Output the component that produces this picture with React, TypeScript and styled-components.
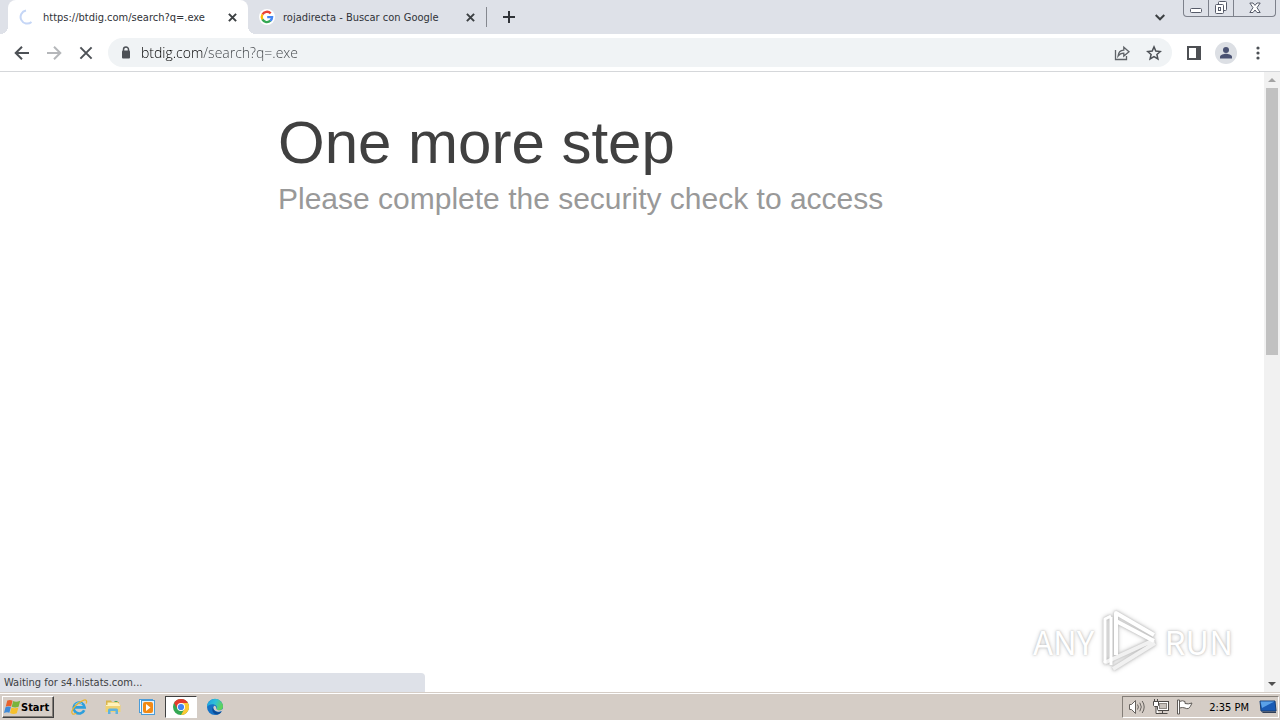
import React from "react";
import styled, { createGlobalStyle, css } from "styled-components";

const ui = `"DejaVu Sans Condensed", "DejaVu Sans", Tahoma, sans-serif`;

const GlobalStyle = createGlobalStyle`
  * { box-sizing: border-box; }
  html, body { margin: 0; padding: 0; background: #fff; }
  body { font-family: ${ui}; font-size: 11px; color: #303338; }
  button { font: inherit; color: inherit; border: 0; padding: 0; margin: 0; background: none; }
  svg { display: block; flex: none; }
`;

const Screen = styled.div`
  display: flex;
  flex-direction: column;
  height: 100vh;
  overflow: hidden;
`;

const TabStrip = styled.header`
  display: flex;
  height: 34px;
  flex: none;
  padding-left: 8px;
  background: #dee1e8;
`;

const TabItem = styled.div<{ $active?: boolean }>`
  position: relative;
  display: flex;
  align-items: center;
  width: ${(p) => (p.$active ? 240 : 238)}px;
  height: 34px;
  padding: 0 9px 0 11px;
  ${(p) =>
    p.$active &&
    css`
      background: #fff;
      border-radius: 8px 8px 0 0;
      &::before,
      &::after {
        content: "";
        position: absolute;
        bottom: 0;
        width: 8px;
        height: 8px;
      }
      &::before {
        left: -8px;
        background: radial-gradient(circle at 0 0, #dee1e8 8px, #fff 8px);
      }
      &::after {
        right: -8px;
        background: radial-gradient(circle at 100% 0, #dee1e8 8px, #fff 8px);
      }
    `}
`;

const TabLabel = styled.button`
  display: flex;
  align-items: center;
  flex: 1;
  gap: 8px;
  min-width: 0;
  white-space: nowrap;
  text-align: left;
`;

const IconButton = styled.button<{ $w?: number }>`
  display: flex;
  align-items: center;
  justify-content: center;
  flex: none;
  width: ${(p) => p.$w ?? 32}px;
  height: 28px;
`;

const TabClose = styled(IconButton)`
  width: 14px;
`;

const TabDivider = styled.span`
  align-self: center;
  width: 1px;
  height: 20px;
  margin-right: 6px;
  background: #85888f;
`;

const StripButton = styled(IconButton)`
  height: 34px;
`;

const Spacer = styled.div`
  flex: 1;
`;

const WindowButtons = styled.div`
  display: flex;
  height: 17px;
  margin: 0 4px 0 7px;
  border: 1px solid #7d818b;
  border-top: 0;
  border-radius: 0 0 4px 4px;
`;

const WindowButton = styled.button<{ $w: number }>`
  display: flex;
  align-items: center;
  justify-content: center;
  width: ${(p) => p.$w}px;
  & + & {
    border-left: 1px solid #7d818b;
  }
`;

const Toolbar = styled.nav`
  display: flex;
  align-items: center;
  height: 38px;
  flex: none;
  padding: 0 6px;
  background: #fff;
  border-bottom: 1px solid #d5d7da;
`;

const AddressBar = styled.label`
  display: flex;
  align-items: center;
  flex: 1;
  height: 29px;
  margin: 0 6px;
  padding: 0 2px 0 10px;
  border-radius: 15px;
  background: #f0f3f5;
`;

const AddressInput = styled.input`
  flex: 1;
  min-width: 0;
  height: 28px;
  margin-left: 7px;
  padding: 0;
  border: 0;
  outline: 0;
  font: 300 14px/28px "Open Sans", "Noto Sans", sans-serif;
  color: #3f4347;
  background: linear-gradient(90deg, #000 62px, #3f4347 62px);
  background-clip: text;
  -webkit-text-fill-color: transparent;
`;

const Viewport = styled.div`
  position: relative;
  display: flex;
  flex: 1;
  min-height: 0;
`;

const Page = styled.main`
  flex: 1;
  padding-top: 35px;
  font-family: "Liberation Sans", Arial, sans-serif;
`;

const Heading = styled.section`
  max-width: 708px;
  margin: 0 auto;
`;

const Title = styled.h1`
  margin: 0;
  font-size: 60px;
  line-height: 72px;
  font-weight: 400;
  color: #404040;
`;

const Subtitle = styled.h2`
  margin: 0;
  font-size: 30px;
  line-height: 40px;
  font-weight: 400;
  color: #999;
`;

const ScrollColumn = styled.div`
  display: flex;
  flex-direction: column;
  width: 16px;
  background: #f1f1f1;
`;

const ScrollArrow = styled.button`
  display: flex;
  align-items: center;
  justify-content: center;
  height: 16px;
  flex: none;
`;

const ScrollThumb = styled.div`
  flex: 5;
  margin: 0 2px;
  background: #c1c1c1;
`;

const ScrollRest = styled.div`
  flex: 6;
`;

const StatusBubble = styled.output`
  position: absolute;
  left: 0;
  bottom: 0;
  width: 425px;
  height: 19px;
  padding-left: 4px;
  line-height: 20px;
  background: #dee1e8;
  border-top-right-radius: 4px;
  color: #3c4043;
`;

const Watermark = styled.div`
  position: absolute;
  right: 47px;
  bottom: 19px;
  display: flex;
  align-items: center;
  gap: 6px;
  font: 400 33px/64px "Noto Sans CJK JP", "Liberation Sans", sans-serif;
  color: #fff;
  text-shadow: 0 0 2px #bbb, 0 0 4px #ccc;
  svg {
    filter: drop-shadow(0 0 1px #bbb) drop-shadow(0 0 2px #ccc);
  }
`;

const Taskbar = styled.footer`
  display: flex;
  align-items: center;
  flex: none;
  height: 28px;
  padding: 1px 1px 0 2px;
  background: #d5cdc6;
  border-top: 1px solid #d5cdc6;
  box-shadow: inset 0 1px #fff;
`;

const StartButton = styled.button`
  display: flex;
  align-items: center;
  width: 52px;
  height: 22px;
  padding-left: 1px;
  margin-right: 8px;
  border: 1px solid;
  border-color: #fff #404040 #404040 #fff;
  box-shadow: inset -1px -1px #847e78;
  font-weight: 700;
  color: #000;
`;

const TaskButton = styled.button<{ $active?: boolean }>`
  display: flex;
  align-items: center;
  justify-content: center;
  width: 32px;
  height: 22px;
  margin: 0 1px;
  ${(p) =>
    p.$active &&
    css`
      background: #fff;
      border: 1px solid;
      border-color: #404040 #fff #fff #404040;
    `}
`;

const Tray = styled.div`
  display: flex;
  align-items: center;
  height: 22px;
  padding: 0 1px 0 2px;
  border: 1px solid;
  border-color: #847e78 #fff #fff #847e78;
`;

const TrayButton = styled.button<{ $w?: number }>`
  display: flex;
  justify-content: center;
  width: ${(p) => p.$w ?? 24}px;
`;

const Clock = styled.time`
  margin: 0 10px 0 12px;
  color: #000;
`;

const CrossIcon = ({ size, color = "#3c4043", width = 2 }: { size: number; color?: string; width?: number }) => (
  <svg width={size} height={size} viewBox="0 0 10 10" stroke={color} strokeWidth={(width * 10) / size}>
    <path d="M1 1 9 9M9 1 1 9" />
  </svg>
);

const ArrowIcon = ({ forward }: { forward?: boolean }) => (
  <svg width="16" height="16" viewBox="0 0 16 16" fill="none" stroke={forward ? "#b5b7ba" : "#4d5156"} strokeWidth="2">
    <path d={forward ? "M1 8h13M8 1.7 14.3 8 8 14.3" : "M15 8H2M8 1.7 1.7 8 8 14.3"} />
  </svg>
);

const GoogleIcon = () => (
  <svg width="16" height="16" viewBox="0 0 16 16">
    <circle cx="8" cy="8" r="8" fill="#fff" />
    <g fill="none" strokeWidth="2.3">
      <path d="M3.4 5.6A5.1 5.1 0 0 1 11.7 4.4" stroke="#ea4335" />
      <path d="M3.4 5.5a5.1 5.1 0 0 0 0 5" stroke="#fbbc05" />
      <path d="M3.4 10.4a5.1 5.1 0 0 0 8 1.3" stroke="#34a853" />
      <path d="M11.3 11.8A5 5 0 0 0 13.1 8.1H8.2" stroke="#4285f4" />
    </g>
  </svg>
);

const WindowsFlag = () => (
  <svg width="17" height="16" viewBox="0 0 17 16">
    <path d="M3.3 1.6C5.2.6 7 .8 8.6 1.700L7.100 7.500C5.500 6.700 3.700 6.600 1.700 7.700Z" fill="#e8622c" />
    <path d="M9.200 2C11 3 13.200 3 16.200 1.700L14.600 7.700C12 8.800 9.800 8.600 7.700 7.700Z" fill="#79b43c" />
    <path d="M1.500 8.300C3.500 7.200 5.300 7.300 6.900 8.100L5.400 13.800C3.900 12.900 2 12.900 0 14Z" fill="#3f8ad8" />
    <path d="M7.500 8.500C9.400 9.400 11.600 9.500 14.400 8.400L12.800 14.200C10.400 15.400 8.200 15.100 6 14Z" fill="#f6c02c" />
  </svg>
);

const IeIcon = () => (
  <svg width="18" height="18" viewBox="0 0 18 18" fill="none">
    <path d="M14.200 12.200A5.500 5.500 0 1 1 14.600 9.400H5" stroke="#2d9fdc" strokeWidth="2.600" />
    <path d="M4.900 6.900A4.600 4.600 0 0 1 12 6" stroke="#8ed6f6" strokeWidth="1" />
    <path d="M16.200 5.600C17.200 3 16.500 1.200 13.300 2.300 8.500 4 2.900 9.500 1.900 13.500 1.200 16.500 3.400 16.900 6.200 15.200" stroke="#e9b52f" strokeWidth="1.300" />
  </svg>
);

const FolderIcon = () => (
  <svg width="18" height="18" viewBox="0 0 18 18">
    <path d="M2 2.500h5l1 1.500h7V14H2z" fill="#d9b54c" />
    <path d="M3.500 4.500h10l2 1.500v7h-12z" fill="#fff3b8" />
    <path d="M1.500 7h15v7h-15z" fill="#efd272" />
    <path d="M2 7.500h14" stroke="#fff2bd" />
    <path d="M4 16v-4q0-1.500 1.500-1.500h7q1.500 0 1.500 1.500v4h-2.500v-3h-5v3z" fill="#5fb3de" />
    <path d="M10.500 3h3v1h-3z" fill="#49a55b" />
  </svg>
);

const PlayerIcon = () => (
  <svg width="18" height="18" viewBox="0 0 18 18">
    <rect x="1.500" y="1.500" width="13" height="13" fill="#fff" stroke="#4b9cd8" />
    <rect x="3.500" y="2.500" width="13" height="14" fill="#e8f4fb" stroke="#4b9cd8" />
    <rect x="5" y="4" width="10" height="11" rx="2" fill="#f28a16" />
    <path d="M8 6 12.500 9.500 8 13z" fill="#fff" />
  </svg>
);

const ChromeIcon = () => (
  <svg width="16" height="16" viewBox="0 0 16 16">
    <circle cx="8" cy="8" r="8" fill="#34a853" />
    <path d="M1.070 4A8 8 0 0 1 14.930 4H8L4.600 10z" fill="#e53b2e" />
    <path d="M14.930 4A8 8 0 0 1 8 16L11.400 10 8 4z" fill="#fcc934" />
    <circle cx="8" cy="8" r="4" fill="#fff" />
    <circle cx="8" cy="8" r="3.100" fill="#4285f4" />
  </svg>
);

const EdgeIcon = () => (
  <svg width="18" height="18" viewBox="0 0 18 18">
    <defs>
      <linearGradient id="edgeTop" x1="0" x2="1" y1="0" y2="0.400">
        <stop offset="0" stopColor="#1b9de2" />
        <stop offset="0.550" stopColor="#2fc0d8" />
        <stop offset="1" stopColor="#5ed35a" />
      </linearGradient>
    </defs>
    <circle cx="9" cy="9" r="8" fill="#1672c6" />
    <path d="M1 9A8 8 0 0 1 17 8.500C17 11.200 15 12.300 13 12.300 11 12.300 10 11.500 10.600 10.500 11.800 8.500 9.500 6.200 6.500 6.200 3.700 6.200 1.500 7.700 1 9Z" fill="url(#edgeTop)" />
    <path d="M10.300 10.500C10.500 9.300 9.500 8 8.500 7.800 6.500 9 7 12.500 11 13.500 13.500 14 15.500 13.500 16.500 12.500L17.500 13V10.500C15.500 12.800 10.500 13 10.300 10.500Z" fill="#d5cdc6" />
    <path d="M6.900 9C5 13 8 16.500 11.500 16.600 13.800 16 15.200 14.600 15.700 13.500 12 15.500 7.500 13.500 6.900 9Z" fill="#0c4b97" />
  </svg>
);

const SpeakerIcon = () => (
  <svg width="18" height="16" viewBox="0 0 18 16" fill="#fff" stroke="#66625e">
    <path d="M1.500 5.500h2L7.500 1.500v13l-4-4h-2z" />
    <path d="M9.500 5.500q1.800 2.500 0 5M11.800 3.700q3 4.300 0 8.600M14.200 2q4 6 0 12" fill="none" />
  </svg>
);

const NetworkIcon = () => (
  <svg width="18" height="16" viewBox="0 0 18 16" fill="#fff" stroke="#4c4946">
    <rect x="5.500" y="2.500" width="11" height="9" />
    <rect x="7.500" y="4.500" width="7" height="5" fill="#c7c1bb" stroke="#8d8882" />
    <path d="M10.500 11.500v3M6.500 14.500h9" />
    <path d="M1.500 2.500h5v4l-1 1h-3l-1-1zM2.500 0v2M5.500 0v2M4 7.500v7h3" />
  </svg>
);

const FlagIcon = () => (
  <svg width="18" height="16" viewBox="0 0 18 16" fill="#fff" stroke="#5f5b57">
    <path d="M3.500 2.500q3-1.500 5.500 0v2q3 1 7-.500-1.500 4-3.500 5.500-2 .500-3.500-.500-2.500-1-5.500 0z" />
    <path d="M1.500 1h2v14h-2z" />
  </svg>
);

const DesktopIcon = () => (
  <svg width="18" height="16" viewBox="0 0 18 16">
    <path d="M1 2h15l1 10H2z" fill="#1a5bb5" stroke="#173f75" />
    <path d="M1.500 2.500h14L3 9z" fill="#5aa1e8" />
    <path d="M2 12.500h15v1.500H4z" fill="#303f57" />
  </svg>
);

export default function App() {
  return (
    <Screen>
      <GlobalStyle />
      <TabStrip>
        <TabItem $active>
          <TabLabel>
            <svg width="16" height="16" viewBox="0 0 16 16" fill="none" stroke="#c5d6f6" strokeWidth="2">
              <path d="M7 1.500A6.600 6.600 0 1 0 12.500 13" />
            </svg>
            https://btdig.com/search?q=.exe
          </TabLabel>
          <TabClose aria-label="Close tab"><CrossIcon size={9} /></TabClose>
        </TabItem>
        <TabItem>
          <TabLabel>
            <GoogleIcon />
            rojadirecta - Buscar con Google
          </TabLabel>
          <TabClose aria-label="Close tab"><CrossIcon size={9} /></TabClose>
        </TabItem>
        <TabDivider />
        <StripButton aria-label="New tab">
          <svg width="12" height="12" viewBox="0 0 12 12" stroke="#303338" strokeWidth="2">
            <path d="M6 0v12M0 6h12" />
          </svg>
        </StripButton>
        <Spacer />
        <StripButton aria-label="Search tabs">
          <svg width="10" height="7" viewBox="0 0 10 7" fill="none" stroke="#3c4043" strokeWidth="2">
            <path d="M.7 1 5 5.300 9.300 1" />
          </svg>
        </StripButton>
        <WindowButtons>
          <WindowButton $w={24} aria-label="Minimize">
            <svg width="12" height="16" viewBox="0 0 12 16" fill="#fff" stroke="#565b69">
              <rect x=".5" y="8.500" width="11" height="4" rx="1" />
            </svg>
          </WindowButton>
          <WindowButton $w={25} aria-label="Restore">
            <svg width="14" height="14" viewBox="0 0 14 14" fill="#fff" stroke="#565b69">
              <rect x="4.500" y=".5" width="8" height="9" rx="1" />
              <rect x="1.500" y="3.500" width="8" height="9" rx="1" />
              <rect x="4.500" y="6.500" width="2" height="3" />
            </svg>
          </WindowButton>
          <WindowButton $w={42} aria-label="Close">
            <svg width="12" height="12" viewBox="0 0 12 12" fill="#fff" stroke="#565b69">
              <path d="M.8 1h3.200L6 3.400 8 1h3.200L8 5.700l3.200 4.800H8L6 8l-2 2.500H.8L4 5.700z" />
            </svg>
          </WindowButton>
        </WindowButtons>
      </TabStrip>

      <Toolbar>
        <IconButton aria-label="Back"><ArrowIcon /></IconButton>
        <IconButton aria-label="Forward"><ArrowIcon forward /></IconButton>
        <IconButton aria-label="Stop loading"><CrossIcon size={14} color="#4d5156" /></IconButton>
        <AddressBar>
          <svg width="16" height="16" viewBox="0 0 16 16">
            <path d="M5.500 7V4.500a2.500 2.500 0 0 1 5 0V7" fill="none" stroke="#4d5156" strokeWidth="1.500" />
            <rect x="4" y="5.500" width="8" height="8" rx="1" fill="#4d5156" />
          </svg>
          <AddressInput aria-label="Address" defaultValue="btdig.com/search?q=.exe" spellCheck={false} />
          <IconButton aria-label="Share">
            <svg width="16" height="16" viewBox="0 0 16 16" fill="none" stroke="#5f6368" strokeWidth="1.300">
              <path d="M1.500 5v9.500h11V11" />
              <path d="M4 11.200C4.300 7.500 6.500 5.300 9.800 5.100V2.200L15 6.700 9.800 11V8.200C7.200 8.200 5.500 9 4 11.200Z" />
            </svg>
          </IconButton>
          <IconButton aria-label="Bookmark">
            <svg width="16" height="16" viewBox="0 0 16 16" fill="none" stroke="#4d5156" strokeWidth="1.500">
              <path d="m8 1.900 1.800 4.200 4.500.4-3.400 3 1 4.400L8 11.600l-3.900 2.300 1-4.400-3.400-3 4.500-.4z" />
            </svg>
          </IconButton>
        </AddressBar>
        <IconButton aria-label="Side panel">
          <svg width="14" height="14" viewBox="0 0 14 14">
            <path d="M1 1h12v12H1z" fill="#fff" stroke="#4d4f53" strokeWidth="2" />
            <path d="M9 0h5v14H9z" fill="#4d4f53" />
          </svg>
        </IconButton>
        <IconButton aria-label="Profile">
          <svg width="22" height="22" viewBox="0 0 22 22">
            <circle cx="11" cy="11" r="11" fill="#dcdfe4" />
            <circle cx="11" cy="8" r="3" fill="#4a5272" />
            <path d="M5 16.500v-1.700c0-2 4-3 6-3s6 1 6 3v1.700z" fill="#4a5272" />
          </svg>
        </IconButton>
        <IconButton aria-label="Menu">
          <svg width="4" height="14" viewBox="0 0 4 14" fill="#4d5156">
            <circle cx="2" cy="2" r="1.600" />
            <circle cx="2" cy="7" r="1.600" />
            <circle cx="2" cy="12" r="1.600" />
          </svg>
        </IconButton>
      </Toolbar>

      <Viewport>
        <Page>
          <Heading>
            <Title>One more step</Title>
            <Subtitle>Please complete the security check to access</Subtitle>
          </Heading>
        </Page>
        <ScrollColumn>
          <ScrollArrow aria-label="Scroll up">
            <svg width="8" height="4" viewBox="0 0 8 4" fill="#a3a3a3"><path d="M4 0 8 4H0z" /></svg>
          </ScrollArrow>
          <ScrollThumb />
          <ScrollRest />
          <ScrollArrow aria-label="Scroll down">
            <svg width="8" height="4" viewBox="0 0 8 4" fill="#505050"><path d="M0 0h8L4 4z" /></svg>
          </ScrollArrow>
        </ScrollColumn>
        <StatusBubble>Waiting for s4.histats.com...</StatusBubble>
        <Watermark>
          <span>ANY</span>
          <svg width="58" height="64" viewBox="0 0 58 64" fill="none" strokeWidth="4" strokeLinejoin="round">
            <path d="M4 54 54 31M13 60 55 34" stroke="#f1f1f1" />
            <path d="M5 54V10l6-3M11 56V8" stroke="#fff" strokeWidth="3" />
            <path d="M16 46V4l38 22M16 12l38 20" stroke="#fff" />
          </svg>
          <span>RUN</span>
        </Watermark>
      </Viewport>

      <Taskbar>
        <StartButton><WindowsFlag />Start</StartButton>
        <TaskButton aria-label="Internet Explorer"><IeIcon /></TaskButton>
        <TaskButton aria-label="File Explorer"><FolderIcon /></TaskButton>
        <TaskButton aria-label="Media Player"><PlayerIcon /></TaskButton>
        <TaskButton $active aria-label="Chrome"><ChromeIcon /></TaskButton>
        <TaskButton aria-label="Edge"><EdgeIcon /></TaskButton>
        <Spacer />
        <Tray>
          <TrayButton aria-label="Volume"><SpeakerIcon /></TrayButton>
          <TrayButton aria-label="Network"><NetworkIcon /></TrayButton>
          <TrayButton aria-label="Notifications"><FlagIcon /></TrayButton>
          <Clock>2:35 PM</Clock>
          <TrayButton $w={18} aria-label="Show desktop"><DesktopIcon /></TrayButton>
        </Tray>
      </Taskbar>
    </Screen>
  );
}
